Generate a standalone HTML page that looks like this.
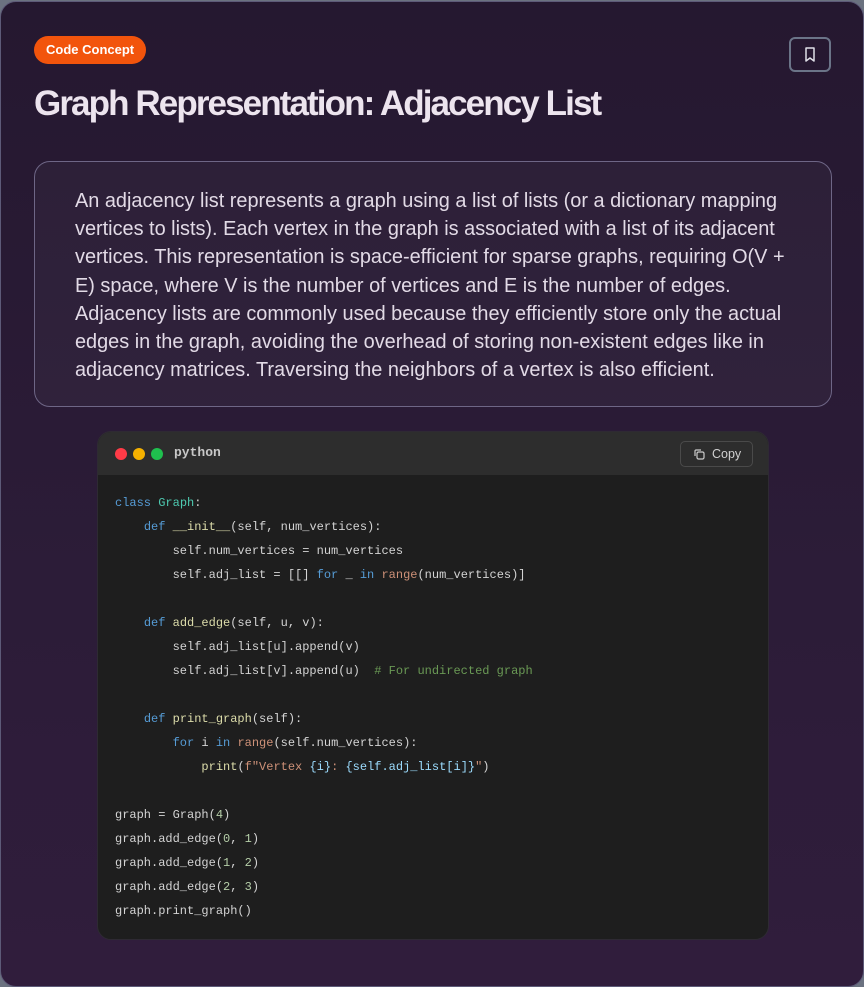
<!DOCTYPE html>
<html><head><meta charset="utf-8"><style>
*{margin:0;padding:0;box-sizing:border-box}
html,body{width:864px;height:987px;background:#6b7280;overflow:hidden}
.card{position:absolute;left:0;top:1px;width:864px;height:986px;border:1px solid #5d5a78;border-radius:16px;background:linear-gradient(180deg,#251830 0%,#2c1c38 60%,#301d3c 100%);font-family:"Liberation Sans",sans-serif}
.tag{position:absolute;left:33px;top:34px;height:28px;padding:0 12px;border-radius:14px;background:#f2540c;color:#fff;font-weight:bold;font-size:13px;line-height:28px}
.bm{position:absolute;left:788px;top:35px;width:42px;height:35px;border:2px solid #6b7488;border-radius:6px}
h1{position:absolute;left:33px;top:82px;font-size:35px;font-weight:bold;color:#ece4ee;letter-spacing:-1.9px}
.desc{position:absolute;left:33px;top:159px;width:798px;height:246px;border:1px solid #6e6686;border-radius:16px;background:rgba(255,255,255,0.03);padding:25px 30px 0 40px;color:#e2dae6;font-size:19.9px;line-height:28.2px}
.code{position:absolute;left:96px;top:429px;width:672px;height:509px;border-radius:14px;background:#1e1e1e;overflow:hidden;border:1px solid #2e2a33}
.hd{height:43px;background:#2d2d2d;position:relative}
.dot{position:absolute;top:16px;width:12px;height:12px;border-radius:50%}
.lang{position:absolute;left:76px;top:13px;color:#c8c8c8;font:bold 13px "Liberation Mono",monospace}
.copy{position:absolute;left:582px;top:9px;width:73px;height:26px;border:1px solid #4a4a4a;border-radius:5px;color:#d0d0d0;font-size:12.5px;line-height:24px;padding-left:31px}
pre{position:absolute;left:17px;top:59px;font:12px/24px "Liberation Mono",monospace;color:#d4d4d4}
.k{color:#569cd6}.c{color:#4ec9b0}.f{color:#dcdcaa}.r{color:#ce9178}.n{color:#b5cea8}.g{color:#6a9955}.v{color:#9cdcfe}
</style></head><body>
<div class="card">
<div class="tag">Code Concept</div>
<div class="bm"><svg width="38" height="31" viewBox="0 0 38 31"><path d="M15 9h8v13l-4-3-4 3z" fill="none" stroke="#e0e0e8" stroke-width="1.5" stroke-linejoin="round"/></svg></div>
<h1>Graph Representation: Adjacency List</h1>
<div class="desc">An adjacency list represents a graph using a list of lists (or a dictionary mapping vertices to lists). Each vertex in the graph is associated with a list of its adjacent vertices. This representation is space-efficient for sparse graphs, requiring O(V + E) space, where V is the number of vertices and E is the number of edges. Adjacency lists are commonly used because they efficiently store only the actual edges in the graph, avoiding the overhead of storing non-existent edges like in adjacency matrices. Traversing the neighbors of a vertex is also efficient.</div>
<div class="code">
<div class="hd"><div class="dot" style="left:17px;background:#ff3b47"></div><div class="dot" style="left:35px;background:#f5b100"></div><div class="dot" style="left:53px;background:#1fc04e"></div><div class="lang">python</div>
<div class="copy"><svg style="position:absolute;left:12px;top:6px" width="13" height="13" viewBox="0 0 13 13"><rect x="4" y="4" width="7" height="7" rx="1.5" fill="none" stroke="#ccc" stroke-width="1.2"/><path d="M2 8V3a1 1 0 0 1 1-1h5" fill="none" stroke="#ccc" stroke-width="1.2"/></svg>Copy</div></div>
<pre><span class="k">class</span> <span class="c">Graph</span>:
    <span class="k">def</span> <span class="f">__init__</span>(self, num_vertices):
        self.num_vertices = num_vertices
        self.adj_list = [[] <span class="k">for</span> _ <span class="k">in</span> <span class="r">range</span>(num_vertices)]

    <span class="k">def</span> <span class="f">add_edge</span>(self, u, v):
        self.adj_list[u].append(v)
        self.adj_list[v].append(u)  <span class="g"># For undirected graph</span>

    <span class="k">def</span> <span class="f">print_graph</span>(self):
        <span class="k">for</span> i <span class="k">in</span> <span class="r">range</span>(self.num_vertices):
            <span class="f">print</span>(<span class="r">f"Vertex </span><span class="v">{i}</span><span class="r">: </span><span class="v">{self.adj_list[i]}</span><span class="r">"</span>)

graph = Graph(<span class="n">4</span>)
graph.add_edge(<span class="n">0</span>, <span class="n">1</span>)
graph.add_edge(<span class="n">1</span>, <span class="n">2</span>)
graph.add_edge(<span class="n">2</span>, <span class="n">3</span>)
graph.print_graph()</pre>
</div>
</div>
</body></html>
